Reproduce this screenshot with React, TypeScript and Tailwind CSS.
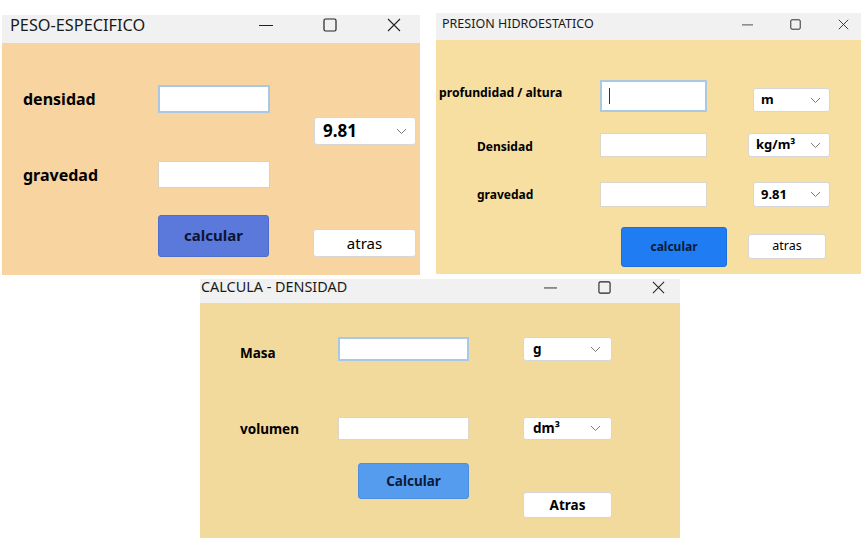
import React from 'react';

const font = { fontFamily: '"Noto Sans", "Open Sans", sans-serif' };

function Chevron() {
  return (
    <svg width="11" height="7" viewBox="0 0 11 7" fill="none">
      <polyline points="1,1 5.5,5.5 10,1" stroke="#7a7a7a" strokeWidth="1" />
    </svg>
  );
}

function TitleIcons({ size, gap, right }: { size: number; gap: string; right: string }) {
  return (
    <div className={`ml-auto flex items-center ${gap} ${right}`}>
      <svg width={size} height={size} viewBox="0 0 14 14" fill="none">
        <line x1="0" y1="7.5" x2="14" y2="7.5" stroke="#222" strokeWidth="1" />
      </svg>
      <svg width={size} height={size} viewBox="0 0 14 14" fill="none">
        <rect x="1" y="1" width="12" height="12" rx="1.5" stroke="#222" strokeWidth="1.2" />
      </svg>
      <svg width={size} height={size} viewBox="0 0 14 14" fill="none">
        <path d="M1 1 L13 13 M13 1 L1 13" stroke="#222" strokeWidth="1.1" />
      </svg>
    </div>
  );
}

function Select({ value, className }: { value: string; className: string }) {
  return (
    <div className={`flex items-center justify-between bg-white rounded-[3px] border border-[#d6d6d6] ${className}`}>
      <span className="font-bold text-black">{value}</span>
      <Chevron />
    </div>
  );
}

export default function App() {
  return (
    <div className="relative w-[861px] h-[538px] bg-white overflow-hidden" style={font}>
      {/* PESO-ESPECIFICO */}
      <div className="absolute left-[2px] top-[15px] w-[418px] h-[260px] flex flex-col">
        <div className="h-[28px] bg-[#f1f1f1]">
          <div className="h-[18px] mt-[1px] flex items-center">
            <span className="pl-[8px] text-[16.3px] leading-[18px] text-[#1a1a1a]">PESO-ESPECIFICO</span>
            <TitleIcons size={14} gap="gap-[50px]" right="mr-[19px]" />
          </div>
        </div>
        <div className="flex-1 bg-[#f8d4a0] pl-[21px]">
          <div className="flex items-center mt-[42px]">
            <span className="w-[135px] text-[16px] font-bold text-black">densidad</span>
            <div className="w-[112px] h-[28px] bg-white border-2 border-[#a8c8e6]" />
          </div>
          <Select value="9.81" className="ml-[291px] mt-[4px] w-[102px] h-[28px] pl-[8px] pr-[8px] text-[17px]" />
          <div className="flex items-center mt-[16px]">
            <span className="w-[135px] text-[16px] font-bold text-black">gravedad</span>
            <div className="w-[112px] h-[27px] bg-white border border-[#d9d2c4]" />
          </div>
          <div className="flex items-end mt-[27px] ml-[135px]">
            <div className="w-[111px] h-[42px] rounded-[3px] bg-[#5b78db] border border-[#4f6dcc] flex items-center justify-center pb-[2px] text-[15px] font-bold text-[#0e1430]">calcular</div>
            <div className="ml-[44px] w-[103px] h-[28px] rounded-[3px] bg-white border border-[#d6d6d6] flex items-center justify-center text-[15px] text-black">atras</div>
          </div>
        </div>
      </div>

      {/* PRESION HIDROESTATICO */}
      <div className="absolute left-[436px] top-[13px] w-[425px] h-[261px] flex flex-col">
        <div className="h-[27px] bg-[#f1f1f1]">
          <div className="h-[20px] mt-[1px] flex items-center">
            <span className="pl-[6px] text-[12.5px] leading-[20px] text-[#1a1a1a]">PRESION HIDROESTATICO</span>
            <TitleIcons size={11} gap="gap-[37px]" right="mr-[12px]" />
          </div>
        </div>
        <div className="flex-1 bg-[#f6dfa1] pl-[3px]">
          <div className="flex items-start mt-[40px]">
            <span className="w-[161px] mt-[4px] leading-[18px] text-[12.2px] font-bold text-black">profundidad / altura</span>
            <div className="w-[107px] h-[32px] bg-white border-2 border-[#a8c8e6] flex items-center pl-[7px]">
              <div className="w-[1px] h-[16px] bg-[#333]" />
            </div>
            <Select value="m" className="ml-[46px] mt-[8px] w-[77px] h-[24px] pl-[7px] pr-[8px] text-[13px]" />
          </div>
          <div className="flex items-start mt-[21px]">
            <span className="w-[161px] pl-[38px] mt-[5px] leading-[18px] text-[12px] font-bold text-black">Densidad</span>
            <div className="w-[107px] h-[24px] bg-white border border-[#ddd6c6]" />
            <Select value="kg/m³" className="ml-[41px] w-[82px] h-[24px] pl-[7px] pr-[8px] text-[13px]" />
          </div>
          <div className="flex items-start mt-[25px]">
            <span className="w-[161px] pl-[38px] mt-[4px] leading-[18px] text-[12px] font-bold text-black">gravedad</span>
            <div className="w-[107px] h-[25px] bg-white border border-[#ddd6c6]" />
            <Select value="9.81" className="ml-[46px] w-[77px] h-[25px] pl-[7px] pr-[8px] text-[13px]" />
          </div>
          <div className="flex items-start mt-[20px] ml-[182px]">
            <div className="w-[106px] h-[40px] rounded-[3px] bg-[#1f7cf3] border border-[#1b70de] flex items-center justify-center text-[12px] font-bold text-[#0d1a33]">calcular</div>
            <div className="ml-[21px] mt-[7px] w-[78px] h-[25px] rounded-[3px] bg-white border border-[#d6d6d6] flex items-center justify-center text-[12.5px] text-black">atras</div>
          </div>
        </div>
      </div>

      {/* CALCULA - DENSIDAD */}
      <div className="absolute left-[200px] top-[279px] w-[480px] h-[259px] flex flex-col">
        <div className="h-[24px] bg-[#f1f1f1]">
          <div className="h-[16px] flex items-center">
            <span className="pl-[1px] text-[14.4px] leading-[16px] text-[#1a1a1a]">CALCULA - DENSIDAD</span>
            <TitleIcons size={13} gap="gap-[41px]" right="mr-[15px]" />
          </div>
        </div>
        <div className="flex-1 bg-[#f2d99c] pl-[40px]">
          <div className="flex items-start mt-[34px]">
            <span className="w-[98px] mt-[7px] leading-[18px] text-[13.5px] font-bold text-black">Masa</span>
            <div className="w-[131px] h-[24px] bg-white border-2 border-[#a8c8e6]" />
            <Select value="g" className="ml-[54px] w-[89px] h-[24px] pl-[9px] pr-[10px] text-[13.5px]" />
          </div>
          <div className="flex items-start mt-[55px]">
            <span className="w-[98px] mt-[3px] leading-[18px] text-[13.5px] font-bold text-black">volumen</span>
            <div className="w-[131px] h-[23px] bg-white border border-[#ddd6c6]" />
            <Select value="dm³" className="ml-[54px] w-[89px] h-[23px] pl-[9px] pr-[10px] text-[13.5px]" />
          </div>
          <div className="flex items-start mt-[23px] ml-[118px]">
            <div className="w-[111px] h-[36px] rounded-[3px] bg-[#559cee] border border-[#4b8fe0] flex items-center justify-center text-[13.5px] font-bold text-[#0d1a33]">Calcular</div>
            <div className="ml-[54px] mt-[29px] w-[89px] h-[26px] rounded-[3px] bg-white border border-[#d6d6d6] flex items-center justify-center text-[13.5px] font-bold text-black">Atras</div>
          </div>
        </div>
      </div>
    </div>
  );
}
